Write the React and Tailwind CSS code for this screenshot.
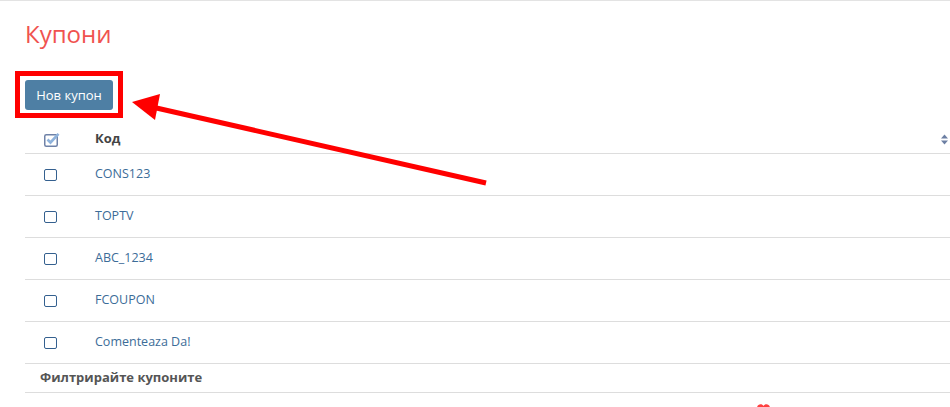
import React from "react";

const codes = ["CONS123", "TOPTV", "ABC_1234", "FCOUPON", "Comenteaza Da!"];

function Checkbox() {
  return (
    <span className="block w-[13px] h-[12px] rounded-[2px] border-[1.5px] border-[#34608f] bg-white" />
  );
}

function CheckSquareIcon() {
  return (
    <svg width="16" height="16" viewBox="0 0 16 16">
      <rect x="0.75" y="3.75" width="12.5" height="11.5" rx="1.5" fill="none" stroke="#6f82a8" strokeWidth="1.5" />
      <path d="M3.5 8.5 L6.5 11.5 L14.5 2.8" fill="none" stroke="#8fb3dc" strokeWidth="2.6" />
    </svg>
  );
}

function SortIcon() {
  return (
    <svg width="7" height="11" viewBox="0 0 7 11">
      <path d="M0 4.5 L3.5 0.5 L7 4.5 Z" fill="#6c7fa3" />
      <path d="M0 6.5 L3.5 10.5 L7 6.5 Z" fill="#6c7fa3" />
    </svg>
  );
}

export default function App() {
  return (
    <div className="relative w-[950px] h-[407px] overflow-hidden bg-white border-t border-[#e3e3e3] font-['Open_Sans',sans-serif]">
      <div className="pl-[25px]">
        <h1 className="pt-[19px] text-[24px] leading-[28px] text-[#f0534f] font-normal">Купони</h1>
        <div className="mt-[32px]">
          <button className="w-[88px] h-[30px] rounded-[3px] bg-[#4e7fa4] text-white text-[13px] leading-[30px] text-center">
            Нов купон
          </button>
        </div>
        <div className="mt-[15px] w-[930px]">
          <div className="flex items-center h-[29px] border-b border-[#dddddd]">
            <div className="w-[70px] pl-[19px] flex items-center">
              <CheckSquareIcon />
            </div>
            <div className="flex-1 text-[13px] font-bold text-[#444]">Код</div>
            <div className="pr-[7px] flex items-center">
              <SortIcon />
            </div>
          </div>
          {codes.map((c) => (
            <div key={c} className="flex items-center h-[42px] border-b border-[#dddddd]">
              <div className="w-[70px] pl-[19px] flex items-center">
                <Checkbox />
              </div>
              <div className="flex-1 text-[12.5px] text-[#3c6c98]">{c}</div>
            </div>
          ))}
          <div className="flex items-center h-[29px] border-b border-[#dddddd] pl-[15px] text-[13px] font-bold text-[#555]">
            Филтрирайте купоните
          </div>
        </div>
      </div>

      {/* annotation: red box */}
      <div className="absolute left-[15px] top-[70px] w-[108px] h-[47px] border-[5px] border-[#ff0000]" />

      {/* annotation: arrow */}
      <svg className="absolute left-0 top-0" width="950" height="407" viewBox="0 0 950 407">
        <line x1="486" y1="182" x2="152" y2="106" stroke="#ff0000" strokeWidth="5" />
        <polygon points="132,101 160,93 155,119" fill="#ff0000" />
        <path d="M757 407 C757 403 762 402 763.5 405 C765 402 770 403 770 407 Z" fill="#ff4040" />
      </svg>
    </div>
  );
}
